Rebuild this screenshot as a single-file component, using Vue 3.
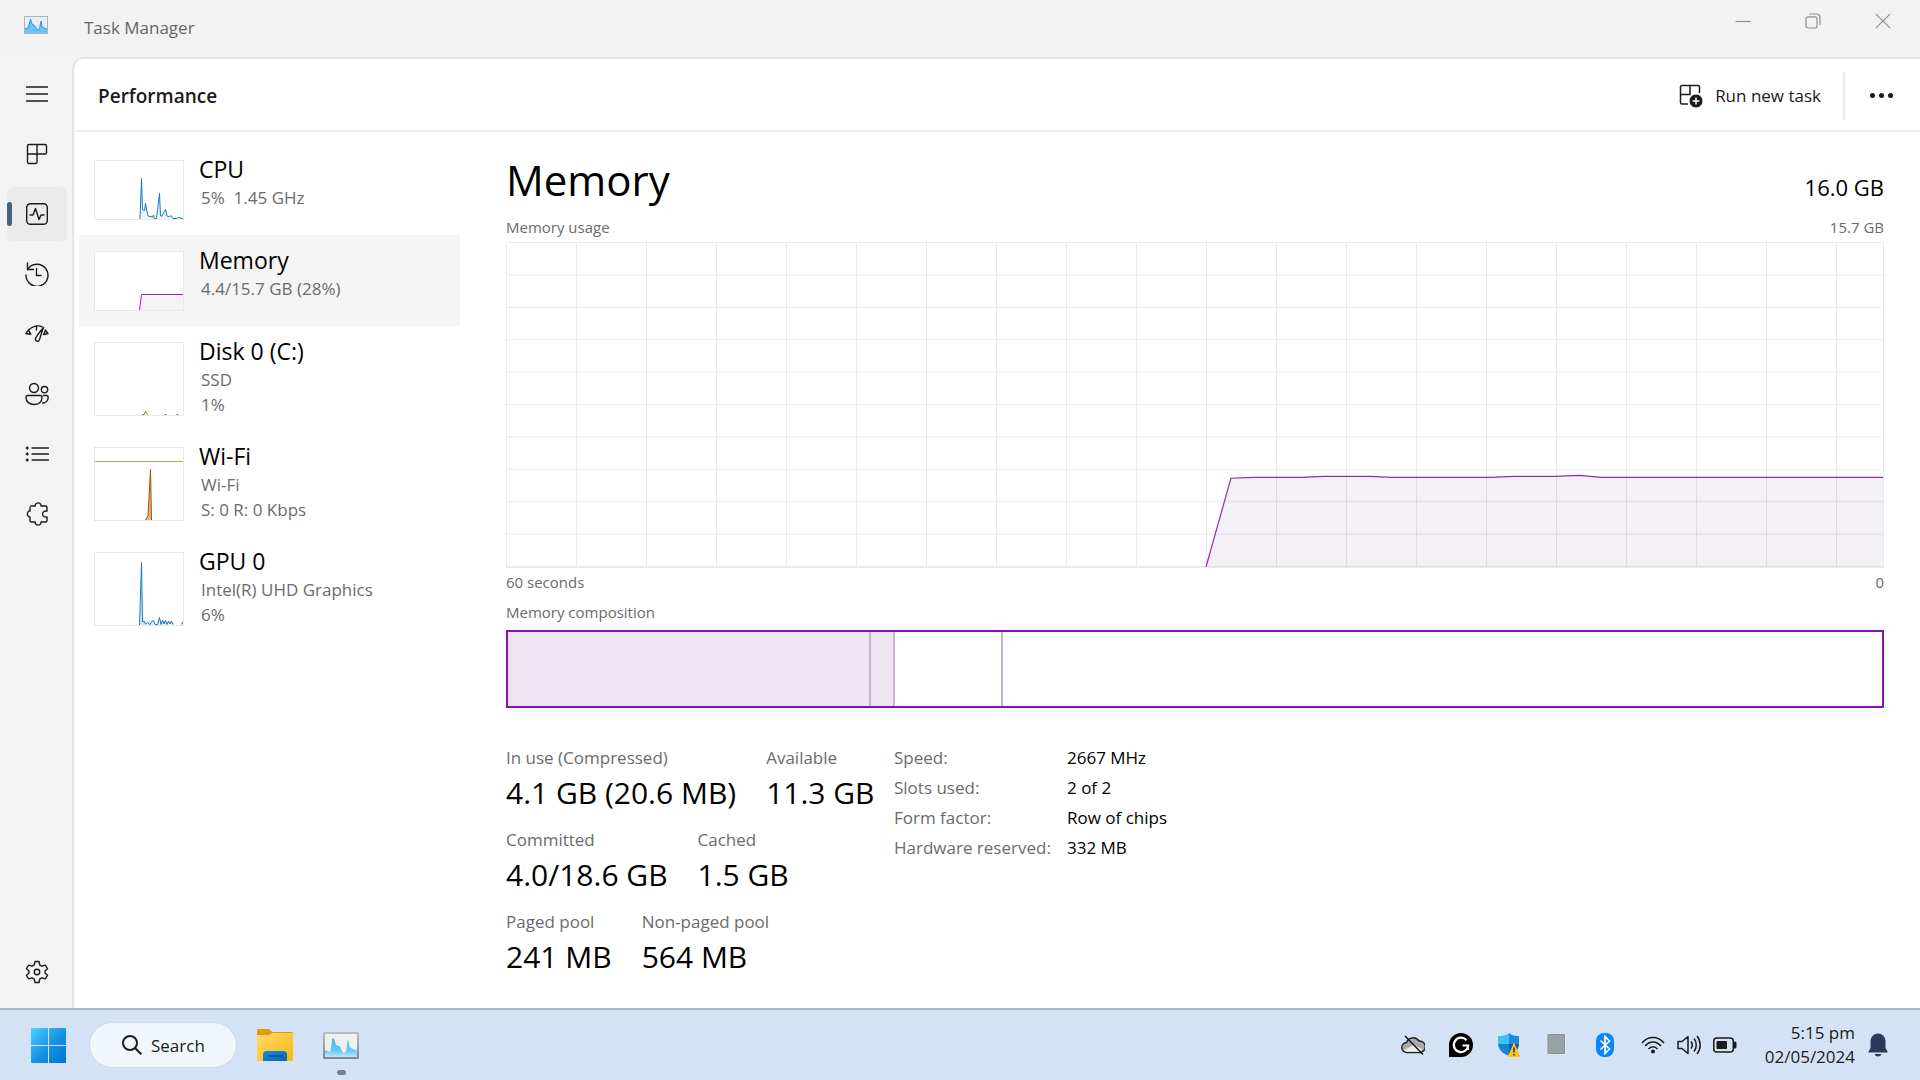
<script setup>
const navItems = [
  { label: 'Open navigation', paths: ['M1.500 5H22.500', 'M1.500 12H22.500', 'M1.500 19H22.500'] },
  { label: 'Processes', paths: ['M4 2.500H20a1.500 1.500 0 0 1 1.500 1.500V10.500a1.500 1.500 0 0 1-1.500 1.500H12V20a1.500 1.500 0 0 1-1.500 1.500H4A1.500 1.500 0 0 1 2.500 20V4A1.500 1.500 0 0 1 4 2.500Z', 'M2.500 12H12V2.500'] },
  { label: 'Performance', active: true, paths: ['M5.500 1.700H18.500A3.800 3.800 0 0 1 22.300 5.500V18.500A3.800 3.800 0 0 1 18.500 22.300H5.500A3.800 3.800 0 0 1 1.700 18.500V5.500A3.800 3.800 0 0 1 5.500 1.700Z', 'M5 13H8L10.500 6.500L14 17.500L16 13H19'] },
  { label: 'App history', paths: ['M2.500 1V7.500H8.500', 'M2.700 7.400A11 11 0 1 1 1 13', 'M11.500 6.500V13.500H16'] },
  { label: 'Startup apps', paths: ['M1 11.500C5 4.500 12.500 2.500 17.300 4.800', 'M1 11.500L5.500 12.200M3.500 8.200L5.800 12.200', 'M11.500 4V8', 'M18.500 5.500C17 9.500 15.500 14 14.500 17.500C13.500 20.500 9.800 19.500 10.500 16.500C12 13 15.500 9 18.500 5.500Z', 'M20.300 8L23 11.500M22.800 11.500L18.500 12.500L20.500 8.500'] },
  { label: 'Users', paths: ['M9 1.500a4.500 4.500 0 1 1 0 9a4.500 4.500 0 1 1 0-9Z', 'M19.500 4.500a3.200 3.200 0 1 1 0 6.400a3.200 3.200 0 1 1 0-6.400Z', 'M3 13.500H15.300A1.700 1.700 0 0 1 17 15.200C17 20 13.500 22.500 9 22.500S1 20 1 15.200A1.900 1.900 0 0 1 3 13.500Z', 'M18.500 13.500H21.500A1.700 1.700 0 0 1 23.200 15.300C23.200 18.500 21 21 17.500 21'] },
  { label: 'Details', paths: ['M7 6H23.500', 'M7 12H23.500', 'M7 18H23.500', 'M1.200 6H3.200M1.200 12H3.200M1.200 18H3.200M2.200 5V7M2.200 11V13M2.200 17V19'] },
  { label: 'Services', paths: ['M5.500 4H10.200C9.800 -0.200 16.500 -0.200 16 4H20.500A1.500 1.500 0 0 1 22 5.500V9C16 8.400 16 15.600 22 15V18.500A1.500 1.500 0 0 1 20.500 20H16C16.500 24.200 9.800 24.200 10.200 20H6.500A1.500 1.500 0 0 1 5 18.500V15C1.500 15.400 1.500 8.600 5 9V5.500'] },
]

const devices = [
  {
    name: 'CPU', lines: ['5%  1.45 GHz'], height: 58, stroke: '#117dbb', fill: '#f1f6fa',
    path: 'M45 58L46.500 17.500L47.500 48.500L49.500 49.500L50.500 42.500L53 55L57.500 56L58.500 54L59.500 57.500H61.500L64.500 32.500L65.500 55H67L69 51L70.500 48.500L72 55L74.500 56L76 54.500L78 57.500H81L83.500 56.500L88 57.500',
  },
  {
    name: 'Memory', lines: ['4.4/15.7 GB (28%)'], height: 58, stroke: '#9528b4', fill: '#f4f2f4', active: true,
    path: 'M44.500 58L46.500 42.500H89V58',
  },
  {
    name: 'Disk 0 (C:)', lines: ['SSD', '1%'], height: 72, stroke: '#4da60c', fill: '#eff7e9',
    path: 'M47 71.500H49L50.500 68.500L52.500 71.500M69.500 71.500H71.500M81.500 71.500H83.500',
  },
  {
    name: 'Wi-Fi', lines: ['Wi-Fi', 'S: 0 R: 0 Kbps'], height: 72, stroke: '#a74f01', fill: '#e3b88e', marker: 13.5,
    path: 'M50.500 72L53 68L55.500 21.500L56.500 72',
  },
  {
    name: 'GPU 0', lines: ['Intel(R) UHD Graphics', '6%'], height: 72, stroke: '#117dbb', fill: '#d9eaf5',
    path: 'M44.500 72L46.500 9.500L47.500 69L49 68L50.500 71L52.500 69.500L55 71.500L56.500 69L58.500 67L60 71.500H62.500L64.500 64.500L66 71.500L67.500 67L69 71L70.500 67.500L72 71.500L73.500 68L75 71L76.500 68L78 71.500M86.500 71.500L88 68.500',
  },
]

const segments = [
  { id: 'in-use', share: 361, filled: true },
  { id: 'modified', share: 22, filled: true },
  { id: 'standby', share: 106, filled: false },
  { id: 'free', share: 879, filled: false },
]

const stats = [
  [{ label: 'In use (Compressed)', value: '4.1 GB (20.6 MB)' }, { label: 'Available', value: '11.3 GB' }],
  [{ label: 'Committed', value: '4.0/18.6 GB' }, { label: 'Cached', value: '1.5 GB' }],
  [{ label: 'Paged pool', value: '241 MB' }, { label: 'Non-paged pool', value: '564 MB' }],
]

const specs = [
  ['Speed:', '2667 MHz'],
  ['Slots used:', '2 of 2'],
  ['Form factor:', 'Row of chips'],
  ['Hardware reserved:', '332 MB'],
]
</script>

<template>
  <div class="desktop">
    <div class="window">
      <header class="titlebar">
        <svg class="app-icon" viewBox="0 0 24 18" aria-hidden="true">
          <rect x="0.5" y="0.5" width="23" height="17" fill="#e9eef3" stroke="#a9b5c4" />
          <path d="M1 12L3.500 13L5 9L6.500 3L8 8L11 10L13 14L15.500 13L17 5L18 10L20 12L23 13V17H1Z" fill="#6cc3f7" />
          <path d="M1 12L3.500 13L5 9L6.500 3L8 8L11 10L13 14L15.500 13L17 5L18 10L20 12L23 13" fill="none" stroke="#2f97dc" />
        </svg>
        <span class="app-title">Task Manager</span>
        <div class="controls">
          <button type="button" aria-label="Minimize"><svg viewBox="0 0 16 16"><path d="M0.500 8.500H15.500" /></svg></button>
          <button type="button" aria-label="Restore"><svg viewBox="0 0 16 16"><path d="M3 3.800H10A2 2 0 0 1 12 5.800V13A2 2 0 0 1 10 15H3A2 2 0 0 1 1 13V5.800A2 2 0 0 1 3 3.800Z" /><path d="M4 1H11.500A3.500 3.500 0 0 1 15 4.500V12" /></svg></button>
          <button type="button" aria-label="Close"><svg viewBox="0 0 16 16"><path d="M0.800 0.800L15.200 15.200M15.200 0.800L0.800 15.200" /></svg></button>
        </div>
      </header>

      <div class="body">
        <nav class="rail">
          <button v-for="item in navItems" :key="item.label" type="button" class="rail-btn" :class="{ active: item.active }" :aria-label="item.label">
            <svg viewBox="0 0 24 24"><path v-for="d in item.paths" :key="d" :d="d" /></svg>
          </button>
          <button type="button" class="rail-btn settings" aria-label="Settings">
            <svg viewBox="0 0 24 24">
              <circle cx="12" cy="12" r="2.700" />
              <path d="M10 1.500H14L14.700 4.800L17 6.200L20.300 5.100L22.500 8.700L20 11V13L22.500 15.300L20.300 18.900L17 17.800L14.700 19.200L14 22.500H10L9.300 19.200L7 17.800L3.700 18.900L1.500 15.300L4 13V11L1.500 8.700L3.700 5.100L7 6.200L9.300 4.800Z" />
            </svg>
          </button>
        </nav>

        <main class="panel">
          <div class="panel-head">
            <h1>Performance</h1>
            <button type="button" class="run">
              <svg viewBox="0 0 24 24" aria-hidden="true">
                <path d="M20.500 9V3A1.500 1.500 0 0 0 19 1.500H3A1.500 1.500 0 0 0 1.500 3V18.500A1.500 1.500 0 0 0 3 20H9M1.500 10.500H11V1.500" />
                <circle cx="17" cy="17" r="7" class="plus-disc" />
                <path d="M17 13.500V20.500M13.500 17H20.500" class="plus" />
              </svg>
              Run new task
            </button>
            <button type="button" class="more" aria-label="More options"><i></i><i></i><i></i></button>
          </div>

          <div class="content">
            <div class="devices">
              <button v-for="d in devices" :key="d.name" type="button" class="device" :class="{ active: d.active }">
                <svg class="thumb" :class="{ tall: d.height > 60 }" :viewBox="`0 0 88 ${d.height}`" aria-hidden="true">
                  <path :d="d.path" :fill="d.fill" :stroke="d.stroke" />
                  <path v-if="d.marker" :d="`M0 ${d.marker}H88`" stroke="#cf9b62" />
                </svg>
                <span class="device-text">
                  <span class="device-name">{{ d.name }}</span>
                  <span v-for="line in d.lines" :key="line" class="device-line">{{ line }}</span>
                </span>
              </button>
            </div>

            <section class="detail">
              <div class="detail-head">
                <h2>Memory</h2>
                <span class="total">16.0 GB</span>
              </div>
              <div class="caption usage"><span>Memory usage</span><span>15.7 GB</span></div>
              <div class="graph">
                <svg viewBox="0 0 1378 325" preserveAspectRatio="none" aria-hidden="true">
                  <path d="M700 325L725 236L747 235H795L818 234H864L886 235H984L1008 234H1050L1074 233L1096 235H1378V325Z" class="area" />
                  <path d="M700 325L725 236L747 235H795L818 234H864L886 235H984L1008 234H1050L1074 233L1096 235H1378" class="line" />
                </svg>
              </div>
              <div class="caption"><span>60 seconds</span><span>0</span></div>
              <div class="caption"><span>Memory composition</span></div>
              <div class="composition">
                <div v-for="s in segments" :key="s.id" class="segment" :class="{ filled: s.filled }" :style="{ flexGrow: s.share }"></div>
              </div>

              <div class="facts">
                <div class="stats">
                  <div v-for="(row, i) in stats" :key="i" class="stat-row">
                    <div v-for="s in row" :key="s.label">
                      <div class="stat-label">{{ s.label }}</div>
                      <div class="stat-value">{{ s.value }}</div>
                    </div>
                  </div>
                </div>
                <table class="specs">
                  <tbody>
                    <tr v-for="[k, v] in specs" :key="k">
                      <th scope="row">{{ k }}</th>
                      <td>{{ v }}</td>
                    </tr>
                  </tbody>
                </table>
              </div>
            </section>
          </div>
        </main>
      </div>
    </div>

    <footer class="taskbar">
      <button type="button" class="tb start" aria-label="Start">
        <svg viewBox="0 0 35 35">
          <defs>
            <linearGradient id="win" x1="0" y1="0" x2="1" y2="1">
              <stop offset="0" stop-color="#4cd0ff" /><stop offset="0.5" stop-color="#1996e3" /><stop offset="1" stop-color="#0072d0" />
            </linearGradient>
          </defs>
          <path d="M1 0H17V17H0V1A1 1 0 0 1 1 0ZM18 0H34A1 1 0 0 1 35 1V17H18ZM0 18H17V35H1A1 1 0 0 1 0 34ZM18 18H35V34A1 1 0 0 1 34 35H18Z" fill="url(#win)" />
        </svg>
      </button>
      <button type="button" class="search">
        <svg viewBox="0 0 20 20" aria-hidden="true"><circle cx="8" cy="8" r="7" /><path d="M13 13L19.300 19.300" /></svg>
        Search
      </button>
      <button type="button" class="tb" aria-label="File Explorer">
        <svg class="folder" viewBox="0 0 36 33">
          <defs>
            <linearGradient id="fold" x1="0" y1="0" x2="1" y2="1"><stop offset="0" stop-color="#ffd969" /><stop offset="1" stop-color="#fbb810" /></linearGradient>
            <linearGradient id="tray" x1="0" y1="0" x2="1" y2="1"><stop offset="0" stop-color="#168fdc" /><stop offset="1" stop-color="#0a64b8" /></linearGradient>
          </defs>
          <path d="M1.500 0H11.500C13 0 14 3 16 3H34.500A1.500 1.500 0 0 1 36 4.500V10H0V1.500A1.500 1.500 0 0 1 1.500 0Z" fill="#dc9c05" />
          <path d="M0 6H11C13.500 6 14 4 16 4H34.500A1.500 1.500 0 0 1 36 5.500V32H0Z" fill="url(#fold)" />
          <path d="M6 32V25.500A3.500 3.500 0 0 1 9.500 22H26.500A3.500 3.500 0 0 1 30 25.500V32Z" fill="url(#tray)" />
          <path d="M11 27H25" stroke="#0b4f93" stroke-width="1.600" stroke-linecap="round" />
        </svg>
      </button>
      <button type="button" class="tb running" aria-label="Task Manager">
        <svg class="monitor" viewBox="0 0 36 27">
          <defs>
            <linearGradient id="wave" x1="0" y1="0" x2="0" y2="1"><stop offset="0" stop-color="#3ba5ea" /><stop offset="0.700" stop-color="#6ecbfb" /><stop offset="1" stop-color="#b5ecff" /></linearGradient>
            <linearGradient id="frame" x1="0" y1="0" x2="0" y2="1"><stop offset="0" stop-color="#b4bcc8" /><stop offset="1" stop-color="#80878f" /></linearGradient>
          </defs>
          <rect x="1" y="1" width="34" height="25" rx="0.500" fill="#efefee" stroke="url(#frame)" stroke-width="2" />
          <path d="M2 18L5 19L7 20L8 16L9.500 6L11 7L13 13L17 14.500L20 21L23 20L25 7L26.500 15L30 17L34 18.500V25H2Z" fill="url(#wave)" />
        </svg>
      </button>

      <div class="tray">
        <svg viewBox="0 0 24 24" role="img" aria-label="OneDrive">
          <path d="M6 19.500A5 5 0 0 1 5.500 9.500A7 7 0 0 1 18 8A5.700 5.700 0 0 1 19 19.500Z" fill="#a9a9a9" stroke="#202020" stroke-width="1.400" />
          <path d="M3 17L13 12L21 16C21 18 19 18.800 18 18.800H6C4.500 18.800 3.500 18 3 17Z" fill="#ededed" />
          <path d="M4 3L22 21.500" stroke="#111" stroke-width="1.400" />
        </svg>
        <svg viewBox="0 0 24 24" role="img" aria-label="Grammarly">
          <path d="M0 24V12A12 12 0 1 1 12 24Z" fill="#000" />
          <path d="M17.500 7.200A7.200 7.200 0 1 0 19.200 12.500H13.500M18.800 12.500V17" fill="none" stroke="#fff" stroke-width="2.200" />
        </svg>
        <svg viewBox="0 0 24 24" role="img" aria-label="Windows Security">
          <path d="M12 0C15 2.500 18 3 22 3V11H12Z" fill="#1b8be0" /><path d="M12 0C9 2.500 5 3 1 3V11H12Z" fill="#39c3f3" />
          <path d="M1 11H12V23C6 20.500 1.500 17 1 11Z" fill="#1284d8" /><path d="M12 11H22C21.500 17 18 20.500 12 23Z" fill="#0c59a4" />
          <path d="M17 9.500L23.500 24H10.500Z" fill="#ffc20e" /><path d="M17 14.500V19.500M17 21V22.500" stroke="#222" stroke-width="1.400" />
        </svg>
        <svg viewBox="0 0 24 24" role="img" aria-label="Background app">
          <path d="M3 1.500H21V21.500H3Z" fill="#e9edf0" /><path d="M3 1.500H19.500V20.500H3Z" fill="#99a1a7" stroke="#868f95" />
        </svg>
        <svg viewBox="0 0 24 24" role="img" aria-label="Bluetooth">
          <rect x="3" width="18" height="24" rx="8" fill="#0a84ff" />
          <path d="M7.500 7.500L16.500 16L12 20.500V3.500L16.500 8L7.500 16.500" fill="none" stroke="#fff" stroke-width="1.700" />
        </svg>
      </div>
      <button type="button" class="quick" aria-label="Network, volume and battery">
        <svg viewBox="0 0 24 24" class="mono">
          <path d="M1 10C7 2.500 17 2.500 23 10M4 13C8.500 7.500 15.500 7.500 20 13M7.500 16C10 13 14 13 16.500 16" /><circle cx="12" cy="18.500" r="2" class="solid" />
        </svg>
        <svg viewBox="0 0 24 24" class="mono">
          <path d="M1 8.500H5L11 3.500V20.500L5 15.500H1Z" stroke-linejoin="round" /><path d="M14 8.500C15.500 10.500 15.500 13.500 14 15.500M17 5.500C20 9 20 15 17 18.500M20 3C24.200 8 24.200 16 20 21" />
        </svg>
        <svg viewBox="0 0 24 24" class="mono">
          <rect x="0.800" y="5" width="19.500" height="14" rx="3" /><rect x="3.500" y="8" width="10.500" height="8" rx="1" class="solid" /><path d="M22 10V14" stroke-width="3" stroke-linecap="round" />
        </svg>
      </button>
      <div class="clock"><span>5:15 pm</span><span>02/05/2024</span></div>
      <button type="button" class="bell" aria-label="Notifications">
        <svg viewBox="0 0 20 24"><path d="M10 0.500A7.500 7.500 0 0 1 17.500 8V15L19.500 18.500V19.500H0.500V18.500L2.500 15V8A7.500 7.500 0 0 1 10 0.500ZM6.500 21H13.500A3.700 3.700 0 0 1 6.500 21Z" fill="#2b3a5c" /></svg>
      </button>
    </footer>
  </div>
</template>

<style>
body { margin: 0; background: #f3f3f3; }
</style>

<style scoped>
.desktop {
  display: flex;
  flex-direction: column;
  min-height: 100vh;
  font-family: "Open Sans", "Noto Sans", sans-serif;
  font-size: 17px;
  color: #1b1b1b;
}
.desktop, .desktop * { box-sizing: border-box; }
button {
  margin: 0;
  padding: 0;
  border: 0;
  background: none;
  font: inherit;
  color: inherit;
  text-align: left;
}
svg { display: block; flex: none; }
h1, h2 { margin: 0; font-weight: 400; }

.window { flex: 1; display: flex; flex-direction: column; background: #f3f3f3; }
.titlebar { display: flex; height: 57px; padding-left: 24px; padding-right: 2px; background: #f2f2f2; }
.app-icon { width: 24px; height: 18px; margin-top: 16px; }
.app-title { margin-left: 36px; line-height: 56px; color: #666; }
.controls { display: flex; margin-left: auto; height: 42px; }
.controls button { display: grid; place-items: center; width: 70px; }
.controls svg { width: 16px; height: 16px; fill: none; stroke: #8f8f8f; stroke-width: 1.2; }

.body { flex: 1; display: flex; }
.rail { display: flex; flex-direction: column; gap: 6px; width: 72px; padding: 10px 5px 9px 7px; }
.rail-btn { position: relative; display: grid; place-items: center; height: 54px; border-radius: 6px; }
.rail-btn svg { width: 24px; height: 24px; fill: none; stroke: #1b1b1b; stroke-width: 1.4; stroke-linejoin: round; stroke-linecap: round; }
.rail-btn.active { background: #eaeaea; }
.rail-btn.active::before { content: ""; position: absolute; left: 0; top: 15px; width: 5px; height: 24px; border-radius: 3px; background: #47607f; }
.rail-btn.settings { margin-top: auto; }

.panel { flex: 1; min-width: 0; border: solid #e4e4e4; border-width: 2px 0 0 2px; border-top-left-radius: 12px; background: #fff; }
.panel-head { display: flex; align-items: center; height: 73px; padding-top: 2px; padding-left: 24px; border-bottom: 2px solid #efefef; }
.panel-head h1 { flex: 1; font-size: 19px; font-weight: 600; line-height: 28px; }
.run { display: flex; align-items: center; gap: 12px; height: 48px; padding-right: 22px; border-right: 2px solid #ececec; }
.run svg { width: 24px; height: 24px; fill: none; stroke: #1b1b1b; stroke-width: 1.5; }
.run .plus-disc { fill: #1b1b1b; stroke: #fff; stroke-width: 1; }
.run .plus { stroke: #fff; }
.more { display: flex; align-items: center; justify-content: center; gap: 4px; width: 75px; height: 48px; padding-right: 3px; }
.more i { width: 5px; height: 5px; border-radius: 50%; background: #1b1b1b; }

.content { display: flex; gap: 46px; padding: 12px 36px 12px 5px; }
.devices { flex: none; width: 381px; }
.device { display: flex; gap: 15px; width: 100%; padding: 0 15px 15px; }
.device.active { background: #f5f5f5; }
.thumb { width: 90px; height: 60px; margin-top: 16px; border: 1px solid #e8e8e8; background: #fff; }
.thumb.tall { height: 74px; }
.device-text { padding-top: 9px; margin-bottom: -15px; }
.device-name { display: block; font-size: 23px; line-height: 32px; color: #000; }
.device-line { display: block; padding-left: 2px; line-height: 25px; color: #6b6b6b; white-space: pre; }

.detail { flex: 1; min-width: 0; color: #000; }
.detail-head { display: flex; justify-content: space-between; align-items: baseline; height: 72px; }
.detail-head h2 { font-size: 42px; line-height: 72px; }
.total { font-size: 22px; }
.caption { display: flex; justify-content: space-between; height: 30px; font-size: 15px; line-height: 28px; color: #6b6b6b; }
.caption.usage { height: 26px; line-height: 22px; }
.graph {
  height: 326px;
  border: 1px solid #e9e9e9;
  background-image: linear-gradient(to left, #e9e9e9 1px, transparent 1px), linear-gradient(to top, #e9e9e9 1px, transparent 1px);
  background-size: 70px 100%, 100% 10%;
}
.graph svg { width: 100%; height: 100%; }
.graph .area { fill: rgba(80, 40, 110, 0.065); }
.graph .line { fill: none; stroke: #9528b4; stroke-width: 1.2; vector-effect: non-scaling-stroke; }
.composition { display: flex; height: 78px; margin-top: 2px; border: 2px solid #8b12ae; }
.segment { flex-basis: 0; border-right: 2px solid #cdb0d8; }
.segment:last-child { border-right: 0; }
.segment.filled { background: #ede5f2; }

.facts { display: flex; margin-top: 34px; }
.stats { flex: none; width: 388px; }
.stat-row { display: flex; gap: 30px; height: 82px; white-space: nowrap; }
.stat-label { line-height: 32px; color: #6b6b6b; }
.stat-value { font-size: 30px; line-height: 38px; }
.specs { border-collapse: collapse; align-self: flex-start; margin-top: 1px; }
.specs th, .specs td { padding: 0; line-height: 30px; font-weight: 400; text-align: left; white-space: nowrap; }
.specs th { width: 173px; color: #6b6b6b; }

.taskbar { display: flex; align-items: center; height: 72px; padding: 0 32px 0 31px; border-top: 2px solid #abb5c3; background: #d3e3f5; }
.tb { display: grid; place-items: center; }
.start svg { width: 35px; height: 35px; }
.search { display: flex; align-items: center; gap: 9px; width: 146px; height: 44px; margin: 0 21px 0 24px; padding-left: 32px; border-radius: 22px; background: #f1f6fc; box-shadow: 0 0 2px #b8cbe0; }
.search svg { width: 20px; height: 20px; fill: none; stroke: #1b1b1b; stroke-width: 2; }
.folder { width: 36px; height: 33px; }
.running { position: relative; margin-left: 30px; }
.running::after { content: ""; position: absolute; left: 14px; bottom: -16px; width: 9px; height: 5px; border-radius: 3px; background: #75818c; }
.monitor { width: 36px; height: 27px; }
.tray { display: flex; gap: 24px; margin-left: auto; }
.tray svg { width: 24px; height: 24px; }
.quick { display: flex; gap: 12px; margin-left: 24px; }
.mono { width: 24px; height: 24px; fill: none; stroke: #1b1b1b; stroke-width: 1.5; }
.mono .solid { fill: #1b1b1b; stroke: none; }
.clock { width: 118px; text-align: right; }
.clock span { display: block; line-height: 24px; }
.bell { margin-left: 13px; }
.bell svg { width: 20px; height: 24px; }
</style>
